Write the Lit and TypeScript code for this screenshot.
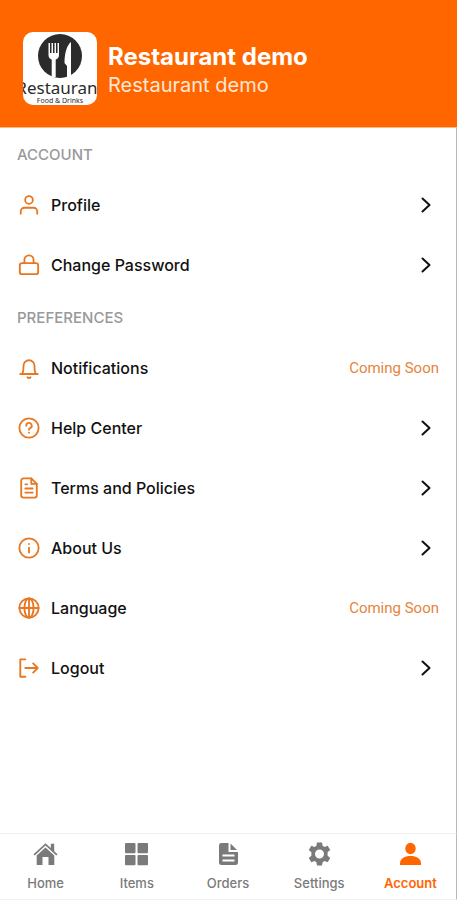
import { LitElement, html, css, svg, nothing } from "lit";
import { customElement, property } from "lit/decorators.js";
import { classMap } from "lit/directives/class-map.js";

const outlineIcons: Record<string, unknown> = {
  profile: svg`<circle cx="12" cy="6.500" r="4.200"/><path d="M3 21.500V19a4 4 0 0 1 4-4h10a4 4 0 0 1 4 4v2.500"/>`,
  lock: svg`<rect x="2" y="10" width="20" height="12" rx="2.500"/><path d="M7 10V6.500a5 5 0 0 1 10 0V10"/>`,
  bell: svg`<path d="M2.500 18.500h19M4.500 18.500c1.300-1.800 1.500-4 1.500-9a6 6 0 0 1 12 0c0 5 .2 7.200 1.500 9"/><path d="M10.300 22a2 2 0 0 0 3.400 0"/>`,
  help: svg`<circle cx="12" cy="12" r="10.500"/><path d="M9 9.500a3 3 0 1 1 4.200 2.700c-.8.400-1.200.8-1.200 1.600"/><path d="M12 17v.2"/>`,
  document: svg`<path d="M14.500 1.500H6a2.500 2.500 0 0 0-2.500 2.500v16A2.500 2.500 0 0 0 6 22.500h12a2.500 2.500 0 0 0 2.500-2.500V7.500z"/><path d="M14.500 1.500v6h6M8 8h2M8 12.500h8M8 17h8"/>`,
  info: svg`<circle cx="12" cy="12" r="10.500"/><path d="M12 11.500V17M12 7.500v.2"/>`,
  globe: svg`<circle cx="12" cy="12" r="10.500"/><ellipse cx="12" cy="12" rx="5" ry="10.500"/><path d="M1.500 12h21M12 1.500v21"/>`,
  logout: svg`<path d="M8 2.500H2.500v19H8M8 12h13.500M16.500 7l5 5-5 5"/>`,
};

const solidIcons: Record<string, unknown> = {
  home: svg`<path d="M12 1.200 0 12.300l1.200 1.300L12 3.600l10.800 10 1.200-1.300-3.300-3.100V1.700h-3.400v4.400z"/><path d="M12 5.500 3.200 13.600V23H9v-8h6v8h5.800v-9.400z"/>`,
  grid: svg`<rect x="0.500" y="1" width="10.500" height="10.200" rx="1"/><rect x="13" y="1" width="10.500" height="10.200" rx="1"/><rect x="0.500" y="13" width="10.500" height="10.200" rx="1"/><rect x="13" y="13" width="10.500" height="10.200" rx="1"/>`,
  orders: svg`<path fill-rule="evenodd" d="M4.500 1H12v9h9.500v10.500a2.500 2.500 0 0 1-2.500 2.500H5A2.500 2.500 0 0 1 2.500 20.500v-17A2.500 2.500 0 0 1 4.500 1zM6 12.500v2h12v-2zM6 17.500v2h12v-2z"/><path d="M14 1.500V8h6.500z"/>`,
  settings: svg`<path fill-rule="evenodd" d="M9.500 0.500h5l.6 3.300 1.900 1.100 3.200-1.100 2.500 4.300-2.600 2.200v3.400l2.600 2.200-2.500 4.300-3.200-1.100-1.900 1.100-.6 3.300h-5l-.6-3.300L7 19.100l-3.200 1.100-2.500-4.300 2.600-2.200v-3.400L1.300 8.100l2.500-4.300L7 4.900l1.900-1.100zM12 7.500a4.500 4.500 0 1 0 0 9 4.500 4.500 0 0 0 0-9z"/>`,
  account: svg`<ellipse cx="12" cy="6.500" rx="5.200" ry="5.800"/><path d="M1.500 23v-1.500C1.500 16.500 6 14 12 14s10.500 2.500 10.500 7.500V23z"/>`,
};

interface MenuItem {
  icon: string;
  label: string;
  soon?: boolean;
}

const sections: { title: string; items: MenuItem[] }[] = [
  {
    title: "ACCOUNT",
    items: [
      { icon: "profile", label: "Profile" },
      { icon: "lock", label: "Change Password" },
    ],
  },
  {
    title: "PREFERENCES",
    items: [
      { icon: "bell", label: "Notifications", soon: true },
      { icon: "help", label: "Help Center" },
      { icon: "document", label: "Terms and Policies" },
      { icon: "info", label: "About Us" },
      { icon: "globe", label: "Language", soon: true },
      { icon: "logout", label: "Logout" },
    ],
  },
];

const tabs = [
  { icon: "home", label: "Home" },
  { icon: "grid", label: "Items" },
  { icon: "orders", label: "Orders" },
  { icon: "settings", label: "Settings" },
  { icon: "account", label: "Account" },
];

@customElement("restaurant-logo")
export class RestaurantLogo extends LitElement {
  static styles = css`
    :host {
      display: flex;
      flex-direction: column;
      align-items: center;
      flex: none;
      box-sizing: border-box;
      width: 74px;
      height: 73px;
      padding-top: 2px;
      border-radius: 10px;
      overflow: hidden;
      background: #fff;
      color: #2b2b2b;
      font-family: "Noto Sans", sans-serif;
    }
    .mark {
      flex: none;
      width: 44px;
      height: 44px;
    }
    .name {
      font-size: 17px;
      line-height: 19px;
      white-space: nowrap;
    }
    .tag {
      font-size: 7px;
      line-height: 8px;
      white-space: nowrap;
    }
  `;

  render() {
    return html`
      <svg class="mark" viewBox="0 0 44 44" aria-hidden="true">
        <circle cx="22" cy="22" r="22" fill="#2b2b2b" />
        <path
          fill="#fff"
          d="M10.500 9h1.500v10h1.500V9h1.500v10h1.500V9h1.500v10h1.500V9H21v12c0 2.500-1.500 4-3.300 4.500V43h-4V25.500C12 25 10.500 23.500 10.500 21z"
        />
        <path fill="#fff" d="M33 8c-4 3-6.500 11-6.500 21l2.500 3v11h4z" />
      </svg>
      <span class="name">Restaurant</span>
      <span class="tag">Food &amp; Drinks</span>
    `;
  }
}

@customElement("menu-row")
export class MenuRow extends LitElement {
  @property() icon = "";
  @property() label = "";
  @property({ type: Boolean }) soon = false;

  static styles = css`
    :host {
      display: block;
    }
    .row {
      display: flex;
      align-items: center;
      gap: 11px;
      width: 100%;
      height: 60px;
      padding: 0 17px 0 18px;
      border: 0;
      background: none;
      color: #111;
      font: 500 16px/20px Inter, sans-serif;
      text-align: left;
      cursor: pointer;
    }
    .icon {
      flex: none;
      width: 22px;
      height: 22px;
      fill: none;
      stroke: #e87722;
      stroke-width: 2;
      stroke-linecap: round;
      stroke-linejoin: round;
    }
    .label {
      flex: 1;
    }
    .soon {
      color: #e5853c;
      font: 400 15px/20px Roboto, sans-serif;
    }
    .chevron {
      flex: none;
      width: 10px;
      height: 16px;
      margin-right: 8px;
      fill: none;
      stroke: #111;
      stroke-width: 2;
      stroke-linecap: round;
      stroke-linejoin: round;
    }
  `;

  render() {
    return html`
      <button class="row" type="button">
        <svg class="icon" viewBox="0 0 24 24" aria-hidden="true">${outlineIcons[this.icon] ?? nothing}</svg>
        <span class="label">${this.label}</span>
        ${this.soon
          ? html`<span class="soon">Coming Soon</span>`
          : html`<svg class="chevron" viewBox="0 0 10 16" aria-hidden="true"><path d="M1.500 1.500 8.500 8l-7 6.500" /></svg>`}
      </button>
    `;
  }
}

@customElement("app-root")
export class AppRoot extends LitElement {
  static styles = css`
    :host {
      display: flex;
      flex-direction: column;
      min-height: 100vh;
      background: #fff;
      font-family: Inter, sans-serif;
    }
    .header {
      display: flex;
      align-items: center;
      gap: 11px;
      padding: 32px 23px 22px;
      border-bottom: 1px solid #ffb98a;
      background: #ff6600;
      color: #fff;
    }
    .names {
      padding-top: 4px;
    }
    .title {
      margin: 0;
      font-size: 24px;
      line-height: 28px;
      font-weight: 700;
    }
    .subtitle {
      margin: 0;
      font-size: 20px;
      line-height: 28px;
      color: #ffe6d6;
    }
    .content {
      flex: 1;
      padding-top: 4px;
      border-right: 1px solid #b8b8b8;
    }
    .heading {
      margin: 0;
      padding: 14px 17px 11px;
      color: #999;
      font-size: 15px;
      line-height: 18px;
      font-weight: 500;
    }
    .tabs {
      display: flex;
      border: 1px solid #f2f2f2;
      border-width: 1px 1px 1px 0;
      border-right-color: #b8b8b8;
    }
    .tab {
      flex: 1 1 0;
      display: flex;
      flex-direction: column;
      align-items: center;
      gap: 8px;
      padding: 8px 0 7px;
      color: #7a7a7a;
      font-size: 13px;
      line-height: 18px;
      font-weight: 500;
      text-decoration: none;
    }
    .tab.active {
      color: #ff6600;
      font-weight: 600;
    }
    .glyph {
      width: 25px;
      height: 24px;
      fill: currentColor;
    }
  `;

  render() {
    return html`
      <header class="header">
        <restaurant-logo></restaurant-logo>
        <div class="names">
          <h1 class="title">Restaurant demo</h1>
          <p class="subtitle">Restaurant demo</p>
        </div>
      </header>
      <main class="content">
        ${sections.map(
          (s) => html`
            <section>
              <h2 class="heading">${s.title}</h2>
              ${s.items.map(
                (i) => html`<menu-row .icon=${i.icon} .label=${i.label} .soon=${!!i.soon}></menu-row>`
              )}
            </section>
          `
        )}
      </main>
      <nav class="tabs" aria-label="Main">
        ${tabs.map((t) => {
          const active = t.label === "Account";
          return html`
            <a class=${classMap({ tab: true, active })} href="#${t.icon}" aria-current=${active ? "page" : nothing}>
              <svg class="glyph" viewBox="0 0 24 24" aria-hidden="true">${solidIcons[t.icon]}</svg>
              <span>${t.label}</span>
            </a>
          `;
        })}
      </nav>
    `;
  }
}
